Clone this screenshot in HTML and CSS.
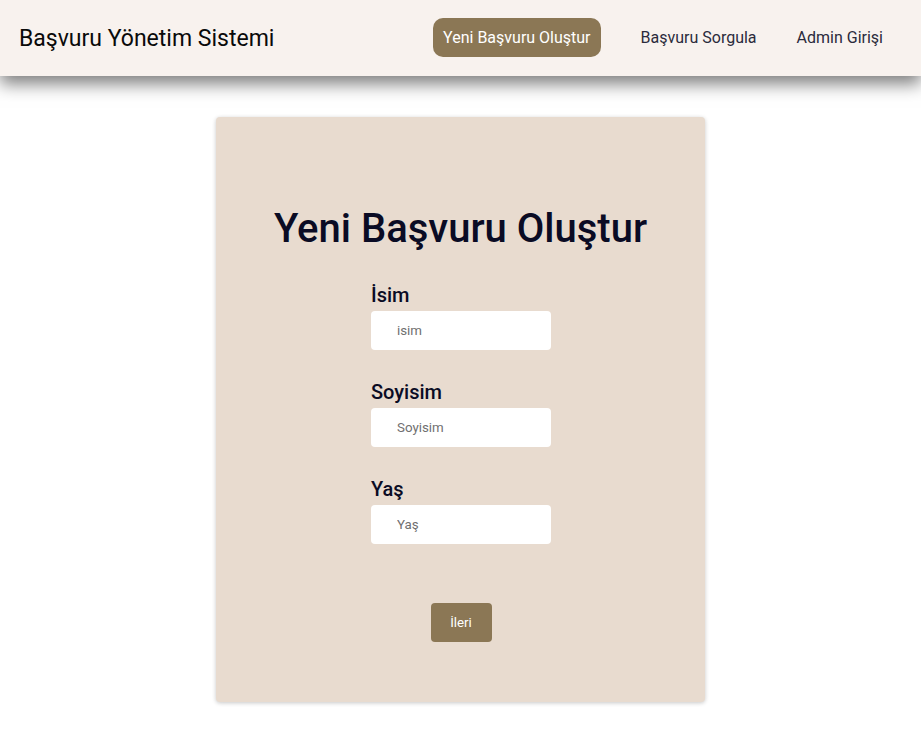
FILE: index.html
```html
<!DOCTYPE html>
<html lang="tr">
<head>
<meta charset="utf-8">
<title>Başvuru Yönetim Sistemi</title>
<link rel="stylesheet" href="styles.css">
</head>
<body>
<header class="topbar">
  <div class="brand">Başvuru Yönetim Sistemi</div>
  <nav class="nav">
    <a class="nav-link active" href="#">Yeni Başvuru Oluştur</a>
    <a class="nav-link" href="#">Başvuru Sorgula</a>
    <a class="nav-link" href="#">Admin Girişi</a>
  </nav>
</header>
<main class="page">
  <section class="card">
    <h1 class="card-title">Yeni Başvuru Oluştur</h1>
    <form class="form">
      <div class="field">
        <label class="field-label" for="isim">İsim</label>
        <input class="field-input" id="isim" type="text" placeholder="isim">
      </div>
      <div class="field">
        <label class="field-label" for="soyisim">Soyisim</label>
        <input class="field-input" id="soyisim" type="text" placeholder="Soyisim">
      </div>
      <div class="field">
        <label class="field-label" for="yas">Yaş</label>
        <input class="field-input" id="yas" type="text" placeholder="Yaş">
      </div>
      <div class="actions">
        <button class="btn-next" type="button">İleri</button>
      </div>
    </form>
  </section>
</main>
</body>
</html>
```

FILE: styles.css
```css
* { box-sizing: border-box; }
html, body { margin: 0; padding: 0; background: #ffffff; }
body { font-family: Roboto, "Liberation Sans", sans-serif; color: #0b0b1e; }

.topbar {
  height: 76px;
  background: #f8f2ee;
  display: flex;
  align-items: center;
  justify-content: space-between;
  padding: 0 28px 0 19px;
  box-shadow: 0 8px 16px rgba(0, 0, 0, 0.5);
  position: relative;
  z-index: 1;
}
.brand {
  font-size: 23px;
  color: #0a0a0a;
}
.nav { display: flex; align-items: center; gap: 20px; margin-top: -1px; }
.nav-link {
  font-size: 16px;
  color: #2b2b3c;
  text-decoration: none;
  padding: 10px 10px;
  border-radius: 10px;
  line-height: 19px;
}
.nav-link.active {
  background: #8b7755;
  color: #ffffff;
  margin-right: 10px;
}

.page {
  display: flex;
  justify-content: center;
  padding: 41px 0 40px;
}
.card {
  width: 489px;
  height: 585px;
  background: #e8dbcf;
  border-radius: 4px;
  box-shadow: 0 1px 4px rgba(0, 0, 0, 0.22);
  padding: 88px 0 0;
  display: flex;
  flex-direction: column;
  align-items: center;
}
.card-title {
  margin: 0;
  font-size: 40px;
  font-weight: 500;
  color: #0a0b24;
  line-height: 47px;
}
.form {
  width: 180px;
  margin-top: 32px;
  margin-left: 1px;
  display: flex;
  flex-direction: column;
}
.field { display: flex; flex-direction: column; margin-bottom: 31px; }
.field:nth-child(3) { margin-bottom: 59px; }
.field-label {
  font-size: 20px;
  font-weight: 500;
  line-height: 23px;
  color: #0a0b24;
  margin-bottom: 4px;
}
.field-input {
  width: 180px;
  height: 39px;
  border: none;
  border-radius: 4px;
  background: #ffffff;
  padding: 0 0 0 26px;
  font-family: Roboto, "Liberation Sans", sans-serif;
  font-size: 13.33px;
  color: #222;
  outline: none;
}
.field-input::placeholder { color: #707070; }
.actions { display: flex; justify-content: center; }
.btn-next {
  width: 61px;
  height: 39px;
  background: #8b7755;
  color: #ffffff;
  border: none;
  border-radius: 4px;
  font-family: Roboto, "Liberation Sans", sans-serif;
  font-size: 13.33px;
}
```
